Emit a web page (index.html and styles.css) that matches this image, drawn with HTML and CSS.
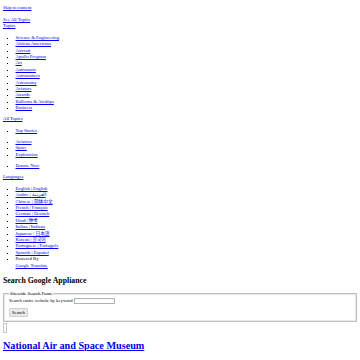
FILE: index.html
```html
<html>
  <head>
    <meta charset="UTF-8" />
    <meta name="viewport" content="width=device-width, initial-scale=1.0" />
    <link rel="stylesheet" href="styles.css">
  </head>
  <body>
    <p><a href="#main">Skip to content</a></p>
    <div class="topics">
      <a href="#">See All Topics</a><br />
      <a href="#">Topics</a>
      <ul>
        <li><a href="#">Science &amp; Engineering</a></li>
        <li><a href="#">African Americans</a></li>
        <li><a href="#">Aircraft</a></li>
        <li><a href="#">Apollo Program</a></li>
        <li><a href="#">Art</a></li>
        <li><a href="#">Astronauts</a></li>
        <li><a href="#">Astronomers</a></li>
        <li><a href="#">Astronomy</a></li>
        <li><a href="#">Aviators</a></li>
        <li><a href="#">Awards</a></li>
        <li><a href="#">Balloons &amp; Airships</a></li>
        <li><a href="#">Business</a></li>
      </ul>
      <a href="#">All Topics</a>
      <ul>
        <li><a href="#">Top Stories</a></li>
      </ul>
      <ul>
        <li><a href="#">Aviation</a></li>
        <li><a href="#">Space</a></li>
        <li><a href="#">Exploration</a></li>
      </ul>
      <ul>
        <li><a href="#">Donate Now</a></li>
      </ul>
    </div>
    <div class="languages">
      <a href="#">Languages</a>
      <ul>
        <li><a href="#">English | English</a></li>
        <li><a href="#">Arabic | العربية</a></li>
        <li><a href="#">Chinese | 简体中文</a></li>
        <li><a href="#">French | Français</a></li>
        <li><a href="#">German | Deutsch</a></li>
        <li><a href="#">Hindi | हिन्दी</a></li>
        <li><a href="#">Italian | Italiano</a></li>
        <li><a href="#">Japanese | 日本語</a></li>
        <li><a href="#">Korean | 한국어</a></li>
        <li><a href="#">Portuguese | Português</a></li>
        <li><a href="#">Spanish | Español</a></li>
        <li>Powered By<br /><a href="#">Google Translate</a></li>
      </ul>
    </div>
    <h2 class="searchTitle">Search Google Appliance</h2>
    <form action="#" method="GET">
      <fieldset>
        <legend>Sitewide Search Form</legend>
        <label>Search entire website by keyword</label>
        <input class="inputBox" type="text" name="q" /><br />
        <input class="submit" type="submit" value="Search" />
      </fieldset>
    </form>
    <div class="frame"></div>
    <h1 id="main"><a href="#">National Air and Space Museum</a></h1>
    <ul class="mainNav">
      <li><a href="#">Visit</a></li>
    </ul>
  </body>
</html>
```
FILE: styles.css
```css
body {
  margin: 3px;
  font-family: "Liberation Serif", "Noto Sans CJK SC", serif;
  font-size: 4.7px;
  line-height: 6.4px;
  color: #000;
  background-color: #fff;
}

a {
  color: #0000ee;
}

p {
  margin: 2px 0 5.6px 0;
}

ul {
  margin: 4.9px 0;
  padding-left: 12.5px;
}

li {
  list-style: square;
}

.topics,
.languages {
  margin-bottom: 4.9px;
}

.searchTitle {
  font-size: 7.8px;
  line-height: 8px;
  margin: 7.7px 0 6px 0;
}

form {
  margin: 0;
}

fieldset {
  margin: 0;
  padding: 1px 5px 4px 5px;
  border: 1px solid #c0c0c0;
  box-shadow: inset 0 0 0 1px #e8e8e8;
}

legend {
  padding: 0 1px;
}

.inputBox {
  width: 41px;
  height: 6px;
  padding: 0;
  border: 1px solid #b0b0b0;
  font-size: 4.7px;
  vertical-align: middle;
}

.submit {
  margin-top: 3px;
  height: 9px;
  padding: 0 2px;
  font-family: "Liberation Serif", serif;
  font-size: 4.7px;
  background-color: #e9e9e9;
  border: 1px solid #d0d0d0;
  border-radius: 1px;
}

.frame {
  width: 2px;
  height: 8px;
  margin-top: 1px;
  border: 1px solid #c8c8c8;
}

h1 {
  font-size: 10.2px;
  line-height: 13px;
  margin: 6px 0 8px 0;
}

.mainNav li {
  list-style: none;
}
```
